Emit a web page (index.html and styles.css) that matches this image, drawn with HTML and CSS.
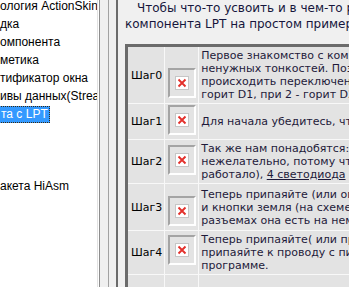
FILE: index.html
```html
<!DOCTYPE html>
<html lang="ru">
<head>
<meta charset="utf-8">
<title>Работа с LPT</title>
<link rel="stylesheet" href="styles.css">
</head>
<body>
<div class="tree">
  <ul class="tree-list">
    <li class="tree-item">ология ActionSkin</li>
    <li class="tree-item">дка</li>
    <li class="tree-item">омпонента</li>
    <li class="tree-item">метика</li>
    <li class="tree-item">тификатор окна</li>
    <li class="tree-item">ивы данных(Stream)</li>
    <li class="tree-item sel"><span class="sel-label">та с LPT</span></li>
    <li class="tree-item"></li>
    <li class="tree-item"></li>
    <li class="tree-item"></li>
    <li class="tree-item">акета HiAsm</li>
  </ul>
</div>
<div class="tree-edge"></div>
<div class="splitter"></div>
<div class="content">
  <p class="intro">Чтобы что-то усвоить и в чем-то разобраться, рассмотрим работу<br>компонента LPT на простом примере.</p>
  <table class="steps">
    <tr class="row r0">
      <td class="label">Шаг0</td>
      <td class="pic"><div class="pic-wrap"><div class="pic-box"><svg class="x" width="14" height="14" viewBox="0 0 14 14"><rect x="0.5" y="0.5" width="13" height="13" fill="#fff" stroke="#c6c6c6"/><path d="M3.5 3.5l7 7M10.5 3.5l-7 7" stroke="#e3302b" stroke-width="1.9"/></svg></div></div></td>
      <td class="text">Первое знакомство с компонентом, без углубления в различные<br>ненужных тонкостей. Позже мы разберем, как будет<br>происходить переключение светодиодов: при 1 -<br>горит D1, при 2 - горит D2, и так далее.</td>
    </tr>
    <tr class="row r1">
      <td class="label">Шаг1</td>
      <td class="pic"><div class="pic-wrap"><div class="pic-box"><svg class="x" width="14" height="14" viewBox="0 0 14 14"><rect x="0.5" y="0.5" width="13" height="13" fill="#fff" stroke="#c6c6c6"/><path d="M3.5 3.5l7 7M10.5 3.5l-7 7" stroke="#e3302b" stroke-width="1.9"/></svg></div></div></td>
      <td class="text">Для начала убедитесь, что у вас есть порт LPT.</td>
    </tr>
    <tr class="row r2">
      <td class="label">Шаг2</td>
      <td class="pic"><div class="pic-wrap"><div class="pic-box"><svg class="x" width="14" height="14" viewBox="0 0 14 14"><rect x="0.5" y="0.5" width="13" height="13" fill="#fff" stroke="#c6c6c6"/><path d="M3.5 3.5l7 7M10.5 3.5l-7 7" stroke="#e3302b" stroke-width="1.9"/></svg></div></div></td>
      <td class="text">Так же нам понадобятся: разъем (паять прямо к порту<br>нежелательно, потому что если что-то сгорит, то не<br>работало), <a class="link" href="#">4 светодиода</a> и провода.</td>
    </tr>
    <tr class="row r3">
      <td class="label">Шаг3</td>
      <td class="pic"><div class="pic-wrap"><div class="pic-box"><svg class="x" width="14" height="14" viewBox="0 0 14 14"><rect x="0.5" y="0.5" width="13" height="13" fill="#fff" stroke="#c6c6c6"/><path d="M3.5 3.5l7 7M10.5 3.5l-7 7" stroke="#e3302b" stroke-width="1.9"/></svg></div></div></td>
      <td class="text">Теперь припаяйте (или оплавьте) провода к выводам D0-D3<br>и кнопки земля (на схеме порта это выводы 18-25, на<br>разъемах она есть на нем обозначена).</td>
    </tr>
    <tr class="row r4">
      <td class="label">Шаг4</td>
      <td class="pic"><div class="pic-wrap"><div class="pic-box"><svg class="x" width="14" height="14" viewBox="0 0 14 14"><rect x="0.5" y="0.5" width="13" height="13" fill="#fff" stroke="#c6c6c6"/><path d="M3.5 3.5l7 7M10.5 3.5l-7 7" stroke="#e3302b" stroke-width="1.9"/></svg></div></div></td>
      <td class="text">Теперь припаяйте( или прикрутите) светодиоды, а минус<br>припаяйте к проводу с пином земли, как указано в<br>программе.</td>
    </tr>
    <tr class="row r5">
      <td class="label">Шаг5</td>
      <td class="pic"><div class="pic-wrap"><div class="pic-box"><svg class="x" width="14" height="14" viewBox="0 0 14 14"><rect x="0.5" y="0.5" width="13" height="13" fill="#fff" stroke="#c6c6c6"/><path d="M3.5 3.5l7 7M10.5 3.5l-7 7" stroke="#e3302b" stroke-width="1.9"/></svg></div></div></td>
      <td class="text">Прежде всего убедитесь, что все собрано правильно.<br>Запустите схему.<br>Проверьте работу.</td>
    </tr>
  </table>
</div>
</body>
</html>
```

FILE: styles.css
```css
html, body {
  margin: 0;
  padding: 0;
}

body {
  width: 349px;
  height: 287px;
  overflow: hidden;
  display: flex;
  background: #f0f0f0;
  font-family: "Liberation Sans", Arial, sans-serif;
}

.tree {
  flex: none;
  width: 97px;
  height: 100%;
  background: #ffffff;
  border-right: 1px solid #e2e2e2;
  overflow: hidden;
  font-size: 12px;
  color: #000;
}

.tree-list {
  margin: -3px 0 0;
  padding: 0;
  list-style: none;
}

.tree-item {
  height: 18px;
  line-height: 18px;
  white-space: nowrap;
}

.sel-label {
  display: inline-block;
  box-sizing: border-box;
  height: 17px;
  line-height: 15px;
  margin-left: -2px;
  padding: 0 1px 0 2px;
  background: #3399ff;
  color: #ffffff;
  border: 1px dotted #3a2a10;
}

.tree-edge {
  flex: none;
  width: 1px;
  background: #ffffff;
}

.splitter {
  flex: none;
  width: 16px;
  border-left: 1px solid #8d8d8d;
  background: linear-gradient(to right, #f0f0f0 8px, #a2a2a2 8px, #a2a2a2 9px, #f0f0f0 9px);
}

.content {
  flex: 1;
  min-width: 0;
  overflow: hidden;
  border-left: 2px solid #6b6b6b;
  padding-left: 7px;
  background: #f0f0f0;
}

.intro {
  margin: 0;
  font-family: "DejaVu Sans", Verdana, sans-serif;
  font-size: 12px;
  line-height: 16px;
  color: #16163c;
  text-indent: 12px;
  white-space: nowrap;
}

.steps {
  margin-top: 12px;
  border: 3px solid #6b6b6b;
  border-collapse: separate;
  border-spacing: 0;
  background: #e3e3e3;
  font-family: "DejaVu Sans", Verdana, sans-serif;
  font-size: 11px;
  line-height: 13px;
}

.steps td {
  border-right: 1px solid #f8f8f8;
  border-bottom: 1px solid #f8f8f8;
  padding: 2px;
}

.label {
  width: 28px;
  vertical-align: middle;
  color: #000;
  white-space: nowrap;
  padding-left: 3px !important;
}

.pic {
  width: 28px;
  vertical-align: top;
  padding: 2px 2px 2px 3px !important;
}

.pic-wrap {
  height: 32px;
}

.pic-box {
  box-sizing: border-box;
  width: 28px;
  height: 30px;
  border: 2px solid;
  border-color: #a4a4a4 #ffffff #ffffff #a4a4a4;
  display: flex;
  align-items: center;
  justify-content: center;
}

.x {
  display: block;
}

.r0 .pic-box { margin-top: 19px; }
.r1 .pic-box { margin-top: -1px; }
.r2 .pic-box { margin-top: 3px; }
.r3 .pic-box { margin-top: 10px; }
.r4 .pic-box { margin-top: 2px; }
.r5 .pic-box { margin-top: 22px; }

.text {
  color: #1e1a3a;
  white-space: nowrap;
  vertical-align: middle;
}

.link {
  color: #1e1a3a;
  text-decoration: underline;
}
```
